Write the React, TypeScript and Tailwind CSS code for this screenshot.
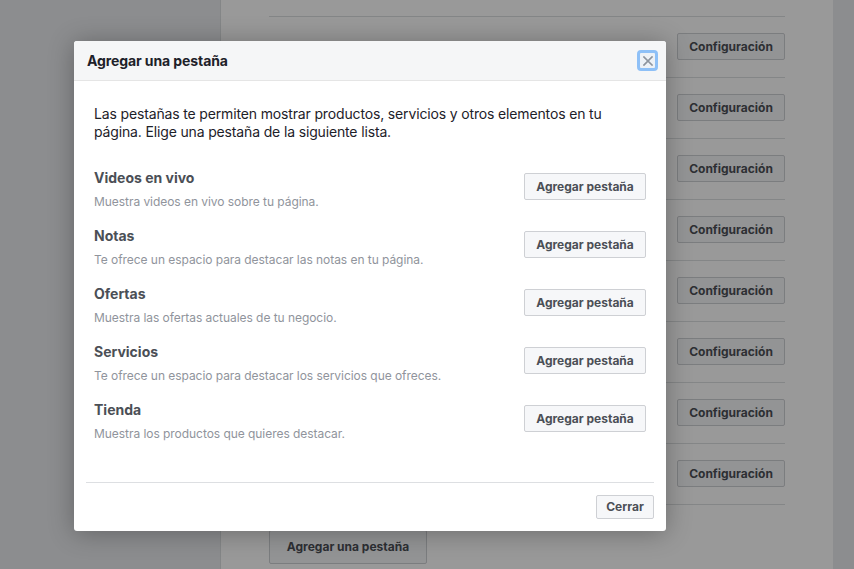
import React from "react";

const items = [
  { t: "Videos en vivo", d: "Muestra videos en vivo sobre tu página." },
  { t: "Notas", d: "Te ofrece un espacio para destacar las notas en tu página." },
  { t: "Ofertas", d: "Muestra las ofertas actuales de tu negocio." },
  { t: "Servicios", d: "Te ofrece un espacio para destacar los servicios que ofreces." },
  { t: "Tienda", d: "Muestra los productos que quieres destacar." },
];

export default function App() {
  const font = { fontFamily: "Inter, 'Liberation Sans', Arial, sans-serif" };
  return (
    <div className="relative w-[854px] h-[569px] overflow-hidden" style={font}>
      {/* page underneath */}
      <div className="flex h-full">
        <div className="w-[220px] bg-[#e9ebee]" />
        <div className="w-[613px] bg-white border-l border-[#dddfe2] pl-[48px]">
          <div className="w-[516px] pt-[16px]">
            {Array.from({ length: 8 }).map((_, i) => (
              <div key={i} className="border-t border-[#dddfe2] h-[61px] flex items-start justify-end pt-[16px]">
                <div className="w-[108px] h-[27px] border border-[#ced0d4] rounded-[2px] bg-[#f6f7f9] flex items-center justify-center text-[12px] font-bold text-[#4b4f56]">
                  Configuración
                </div>
              </div>
            ))}
            <div className="border-t border-[#dddfe2] pt-[25px]">
              <div className="w-[158px] h-[34px] border border-[#ced0d4] rounded-[2px] bg-[#f6f7f9] flex items-center justify-center text-[12px] font-bold text-[#4b4f56]">
                Agregar una pestaña
              </div>
            </div>
          </div>
        </div>
        <div className="flex-1 bg-[#e9ebee]" />
      </div>

      {/* dim overlay */}
      <div className="absolute inset-0 bg-black/40" />

      {/* modal */}
      <div className="absolute left-[74px] top-[41px] w-[592px] h-[490px] bg-white rounded-[3px] shadow-[0_2px_26px_rgba(0,0,0,0.3)] flex flex-col overflow-hidden">
        <div className="h-[40px] bg-[#f5f6f7] border-b border-[#e5e5e5] flex items-center justify-between pl-[13px] pr-[8px] shrink-0">
          <span className="text-[14px] font-bold text-[#1d2129] tracking-[-0.1px]">Agregar una pestaña</span>
          <div className="w-[21px] h-[21px] rounded-[4px] border-[3px] border-[#8ec0f7] bg-[#edf1f6] flex items-center justify-center">
            <svg width="10" height="10" viewBox="0 0 10 10">
              <path d="M1 1 L9 9 M9 1 L1 9" stroke="#8d949e" strokeWidth="1.7" strokeLinecap="square" />
            </svg>
          </div>
        </div>
        <div className="flex-1 px-[20px] pt-[24px]">
          <p className="text-[14px] leading-[18px] text-[#1d2129] mb-[28px] tracking-[-0.15px]">
            Las pestañas te permiten mostrar productos, servicios y otros elementos en tu página. Elige una pestaña de la siguiente lista.
          </p>
          {items.map((it) => (
            <div key={it.t} className="flex items-start justify-between h-[58px]">
              <div>
                <div className="text-[14px] leading-[18px] font-bold text-[#4b4f56]">{it.t}</div>
                <div className="text-[12px] leading-[16px] text-[#90949c] mt-[7px] tracking-[-0.05px]">{it.d}</div>
              </div>
              <div className="mt-[4px] w-[122px] h-[27px] border border-[#ced0d4] rounded-[2px] bg-[#f6f7f9] flex items-center justify-center text-[12px] font-bold text-[#4b4f56]">
                Agregar pestaña
              </div>
            </div>
          ))}
        </div>
        <div className="mx-[12px] border-t border-[#dddfe2] pt-[12px] pb-[12px] flex justify-end shrink-0">
          <div className="w-[58px] h-[24px] border border-[#ced0d4] rounded-[2px] bg-[#f6f7f9] flex items-center justify-center text-[12px] font-bold text-[#4b4f56]">
            Cerrar
          </div>
        </div>
      </div>
    </div>
  );
}
